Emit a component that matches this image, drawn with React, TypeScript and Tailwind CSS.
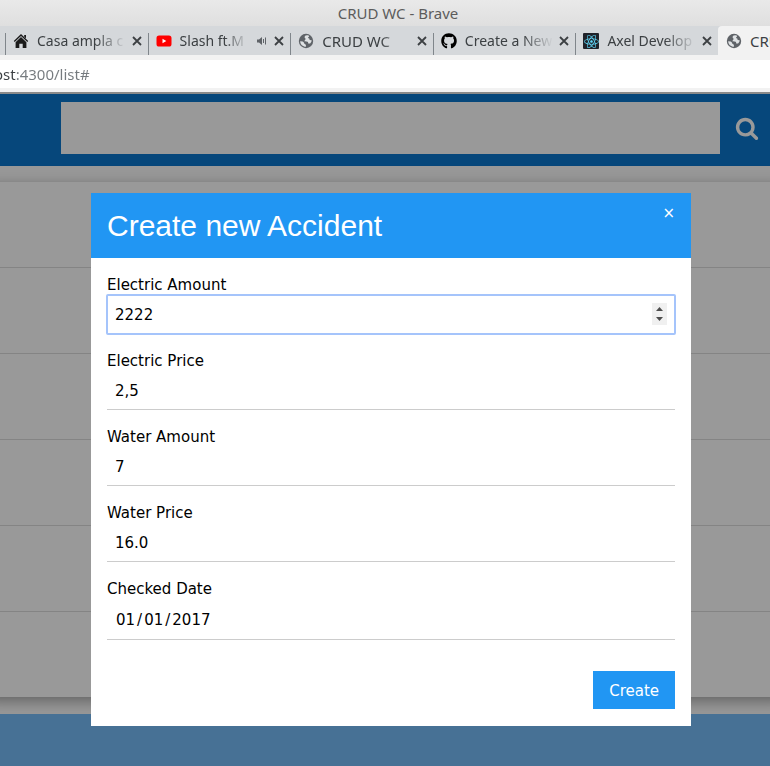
import type { InputHTMLAttributes, ReactNode } from "react";
import { FaGithub, FaReact } from "react-icons/fa";

type TabProps = {
  title: string;
  icon: ReactNode;
  audible?: boolean;
  size?: "text-[14px]" | "text-[15px]";
};

function CloseIcon() {
  return (
    <svg viewBox="0 0 10 10" className="size-[10px]" aria-hidden="true">
      <path d="M1 1l8 8M9 1L1 9" stroke="#3c4043" strokeWidth="1.8" fill="none" />
    </svg>
  );
}

function HomeIcon() {
  return (
    <svg viewBox="0 0 16 16" className="size-4" aria-hidden="true">
      <path d="M8 1L15.2 8l-.9 1L8 3 1.700 9l-.9-1z" fill="#1b1b1b" />
      <path d="M8 4.100L13.400 9.200V15H9.700V10.800H6.300V15H2.600V9.200z" fill="#1b1b1b" />
      <path d="M11.200 2H13V5.400L11.200 3.700z" fill="#1b1b1b" />
    </svg>
  );
}

function YoutubeIcon() {
  return (
    <svg viewBox="0 0 16 16" className="size-4" aria-hidden="true">
      <rect x="0.5" y="2.5" width="15" height="11" rx="2.6" fill="#ff0000" />
      <path d="M6.5 5.7v4.600L10.3 8z" fill="#fff" />
    </svg>
  );
}

function GlobeIcon() {
  return (
    <svg viewBox="0 0 16 16" className="size-4 shrink-0" aria-hidden="true">
      <circle cx="8" cy="8" r="7.2" fill="#5f6368" />
      <path
        d="M9.500 2.200C7.500 2 6.600 3 6.600 4.200c0 1 1 1 1 1.900 0 .8-1 .9-1 1.700 0 .7.900.7 2 .7 1.500 0 1.600 1 1.600 1.900h1.900c.9-.8 1.500-2 1.600-3.200-1.300.3-2.300-.1-2.300-1.100 0-.8-.8-.7-1.500-1 .1-1.100 1.300-1 1.300-2.400z"
        fill="#dfe2e4"
      />
      <path
        d="M2.200 8.300c1 .1 2.600.1 3.200.7.8.7.5 1.500 1.300 1.900.7.300 1.200.4 1.200 1.200v1.700C4.800 13.800 2.300 11.500 2.200 8.300z"
        fill="#dfe2e4"
      />
    </svg>
  );
}

function SpeakerIcon() {
  return (
    <svg viewBox="0 0 12 12" className="size-3 shrink-0" aria-hidden="true">
      <path d="M1 4.500h2L6 2v8L3 7.500H1z" fill="#5f6368" />
      <path d="M7.500 4v4M9.500 2.500v7" stroke="#5f6368" strokeWidth="1" fill="none" />
    </svg>
  );
}

function SearchIcon() {
  return (
    <svg viewBox="0 0 1792 1792" className="size-6" fill="currentColor" aria-hidden="true">
      <path d="M1216 832q0-185-131.5-316.5T768 384 451.5 515.5 320 832t131.5 316.5T768 1280t316.5-131.5T1216 832zm512 832q0 52-38 90t-90 38q-54 0-90-38l-343-342q-179 124-399 124-143 0-273.5-55.5t-225-150-150-225T64 832t55.5-273.5 150-225 225-150T768 128t273.5 55.5 225 150 150 225T1472 832q0 220-124 399l343 343q37 37 37 90z" />
    </svg>
  );
}

function Tab({ title, icon, audible, size = "text-[14px]" }: TabProps) {
  return (
    <div className="flex h-full min-w-0 flex-1 items-end">
      <div className="flex h-[22px] w-full items-center border-l border-[#80868b] pl-[7px] pr-[6px]">
        <button type="button" className="flex h-[22px] min-w-0 flex-1 items-center pb-[6px] text-left">
          <span className="flex size-4 shrink-0 items-center justify-center">{icon}</span>
          <span
            className={
              "ml-2 min-w-0 flex-1 whitespace-nowrap text-[#3c4043] [mask-image:linear-gradient(to_right,#000_65%,transparent)] " +
              size
            }
          >
            {title}
          </span>
          {audible && (
            <span className="ml-2">
              <SpeakerIcon />
            </span>
          )}
        </button>
        <button type="button" aria-label={"Close " + title} className="ml-[6px] pb-[6px]">
          <CloseIcon />
        </button>
      </div>
    </div>
  );
}

function BrowserChrome() {
  return (
    <header className="shrink-0 font-['Noto_Sans',sans-serif] text-[15px] leading-[22px]">
      <div className="flex h-[26px] items-center justify-center bg-linear-to-b from-[#e9e9e9] to-[#dfdfdf] pl-[26px] text-[#5c5c5c]">
        CRUD WC - Brave
      </div>
      <div className="flex h-[29px] overflow-hidden bg-[#d5d8db] pl-[5px]">
        <Tab title="Casa ampla c" icon={<HomeIcon />} />
        <Tab title="Slash ft.M" audible icon={<YoutubeIcon />} />
        <Tab title="CRUD WC" size="text-[15px]" icon={<GlobeIcon />} />
        <Tab title="Create a New" icon={<FaGithub className="size-4 text-black" />} />
        <Tab
          title="Axel Develop"
          icon={
            <span className="flex size-4 items-center justify-center rounded-[1px] bg-[#20232a]">
              <FaReact className="size-[15px] text-[#61dafb]" />
            </span>
          }
        />
        <button
          type="button"
          className="flex h-full w-[52px] shrink-0 items-center overflow-hidden rounded-tl-[4px] bg-[#f2f2f2] pl-2 text-[#3c4043]"
        >
          <GlobeIcon />
          <span className="ml-2 whitespace-nowrap">CRUD WC</span>
        </button>
      </div>
      <div className="border-b-2 border-[#8a8a8a] bg-[#f2f2f2] pb-1 pt-[5px]">
        <div className="flex h-7 items-center bg-white">
          <input
            aria-label="Address"
            defaultValue="ost:4300/list#"
            className="-ml-[6px] w-full bg-linear-to-r from-[#3c4043] from-[22px] to-[#757a7e] to-[22px] bg-clip-text text-[15px] text-transparent outline-none"
          />
        </div>
      </div>
    </header>
  );
}

type FieldProps = InputHTMLAttributes<HTMLInputElement> & { id: string; label: string };

function Field({ id, label, className = "h-[39px]", children, ...input }: FieldProps) {
  return (
    <div className="flex flex-col">
      <label htmlFor={id} className="leading-5">
        {label}
      </label>
      <div className="relative flex">
        <input
          id={id}
          {...input}
          className={"w-full border-b border-[#ccc] bg-white px-2 pb-[7px] pt-[9px] outline-none " + className}
        />
        {children}
      </div>
    </div>
  );
}

function SpinArrows() {
  return (
    <svg
      viewBox="0 0 15 22"
      className="pointer-events-none absolute right-2 top-2 h-[22px] w-[15px] bg-[#f0f0f0]"
      aria-hidden="true"
    >
      <path d="M4 8h7L7.5 4zM4 14h7l-3.500 4z" fill="#4d4d4d" />
    </svg>
  );
}

function AccidentDialog() {
  return (
    <div
      role="dialog"
      aria-labelledby="dialog-title"
      className="w-[600px] bg-white font-['DejaVu_Sans',sans-serif] text-[15px] text-black"
    >
      <div className="flex items-start bg-[#2196f3] pl-4 text-white">
        <h2
          id="dialog-title"
          className="flex-1 py-[10px] font-['Liberation_Sans',sans-serif] text-[30px] leading-[45px]"
        >
          Create new Accident
        </h2>
        <button type="button" aria-label="Close" className="h-[38px] px-4 pt-[2px]">
          ×
        </button>
      </div>
      <form className="flex flex-col px-4 pb-[17px] pt-[17px]" onSubmit={(event) => event.preventDefault()}>
        <div className="flex flex-col gap-[17px]">
          <Field
            id="electric-amount"
            label="Electric Amount"
            type="number"
            defaultValue="2222"
            className="h-[39px] rounded-[1px] outline-2 -outline-offset-1 outline-[#a5c4fb] outline-solid"
          >
            <SpinArrows />
          </Field>
          <Field id="electric-price" label="Electric Price" type="text" defaultValue="2,5" />
          <Field id="water-amount" label="Water Amount" type="text" defaultValue="7" />
          <Field id="water-price" label="Water Price" type="text" defaultValue="16.0" />
          <Field
            id="checked-date"
            label="Checked Date"
            type="date"
            defaultValue="2017-01-01"
            className="h-[41px] [&::-webkit-calendar-picker-indicator]:hidden [&::-webkit-datetime-edit-text]:px-px"
          />
        </div>
        <button type="submit" className="mt-[31px] h-[38px] self-end bg-[#2196f3] px-4 pt-[2px] text-white">
          Create
        </button>
      </form>
    </div>
  );
}

function AccidentPage() {
  return (
    <main className="relative flex flex-1 flex-col overflow-hidden bg-white">
      <form
        className="flex bg-[#0a77ce] pb-3 pl-[61px] pt-2"
        onSubmit={(event) => event.preventDefault()}
      >
        <input type="search" aria-label="Search" className="h-[52px] min-w-0 flex-1 bg-white px-4 outline-none" />
        <button type="submit" aria-label="Search" className="flex w-[50px] items-center pl-[15px] text-white">
          <SearchIcon />
        </button>
      </form>
      <ul className="-mx-5 mb-[17px] mt-4 bg-white shadow-[0_4px_10px_0_rgba(0,0,0,0.2),0_4px_20px_0_rgba(0,0,0,0.19)]">
        <li className="h-[86px] border-b border-[#ddd]" />
        <li className="h-[86px] border-b border-[#ddd]" />
        <li className="h-[86px] border-b border-[#ddd]" />
        <li className="h-[86px] border-b border-[#ddd]" />
        <li className="h-[86px] border-b border-[#ddd]" />
        <li className="h-[85px]" />
      </ul>
      <footer className="relative min-h-[52px] flex-1 bg-[#77bdf8]" />
      <div className="absolute inset-0 flex items-start justify-center bg-black/40 pl-3 pt-[99px]">
        <AccidentDialog />
      </div>
    </main>
  );
}

export default function App() {
  return (
    <div className="flex min-h-screen flex-col">
      <BrowserChrome />
      <AccidentPage />
    </div>
  );
}
